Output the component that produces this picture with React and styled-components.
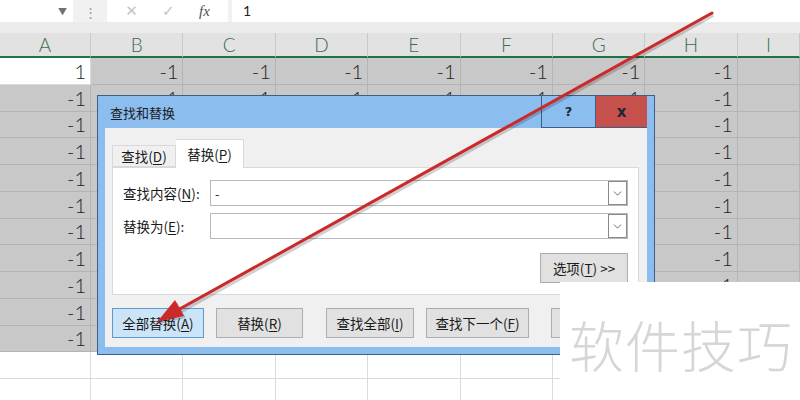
import React from 'react'
import styled, { createGlobalStyle } from 'styled-components'
import { ChevronDown } from 'lucide-react'

const GlobalStyle = createGlobalStyle`
  body {
    margin: 0;
    font-family: "Noto Sans CJK SC", "Noto Sans", sans-serif;
    background: #fff;
  }
`

const Page = styled.div`
  position: relative;
  width: 800px;
  height: 400px;
  overflow: hidden;
  background: #fff;
`

const FormulaBar = styled.div`
  display: flex;
  height: 22px;
  background: #f1f1f1;
`

const NameBox = styled.div`
  width: 73px;
  background: #fff;
  display: flex;
  justify-content: flex-end;
  align-items: center;
  padding-right: 6px;
  box-sizing: border-box;
  color: #707070;
  font-size: 9px;
`

const Grip = styled.div`
  width: 34px;
  display: flex;
  justify-content: center;
  align-items: center;
  color: #9a9a9a;
  font-size: 13px;
`

const FxBox = styled.div`
  width: 121px;
  background: #fff;
  display: flex;
  align-items: center;
  justify-content: space-around;
  padding: 0 6px;
  box-sizing: border-box;
`

const FxIcon = styled.span`
  color: ${({ dark }) => (dark ? '#505050' : '#c4c4c4')};
  font-family: ${({ dark }) => (dark ? '"Liberation Serif", serif' : '"DejaVu Sans", sans-serif')};
  font-style: ${({ dark }) => (dark ? 'italic' : 'normal')};
  font-size: 15px;
`

const FormulaInput = styled.div`
  flex: 1;
  margin-left: 4px;
  background: #fff;
  padding-left: 11px;
  font-family: "Lato", "Noto Sans", sans-serif;
  font-size: 14px;
  line-height: 22px;
  color: #222;
`

const Band = styled.div`
  height: 11px;
  background: #ebebeb;
`

const Sheet = styled.div`
  display: grid;
  grid-template-columns: 91px repeat(7, 92.4px) 1fr;
  grid-template-rows: 25px repeat(13, 26.75px);
`

const ColHead = styled.div`
  background: #e2e2e2;
  border-right: 1px solid #c9c9c9;
  border-bottom: 2px solid #217346;
  display: flex;
  justify-content: center;
  align-items: center;
  font-family: "Lato", "Noto Sans", sans-serif;
  font-weight: 300;
  font-size: 19px;
  color: #3f6a4f;
`

const Cell = styled.div`
  background: ${({ sel }) => (sel ? '#c8c8c8' : '#fff')};
  border-right: 1px solid ${({ sel }) => (sel ? '#b4b4b4' : '#dadada')};
  border-bottom: 1px solid ${({ sel }) => (sel ? '#b4b4b4' : '#dadada')};
  display: flex;
  justify-content: flex-end;
  align-items: center;
  padding-right: 4px;
  font-family: "Lato", "Noto Sans", sans-serif;
  font-weight: 300;
  font-size: 20px;
  color: #1e1e1e;
`

const Dialog = styled.div`
  position: absolute;
  left: 97px;
  top: 95px;
  width: 558px;
  height: 260px;
  box-sizing: border-box;
  border: 1px solid #3d5f86;
  background: #8bbdef;
  padding: 0 7px 7px 7px;
  display: flex;
  flex-direction: column;
`

const TitleBar = styled.div`
  height: 32px;
  display: flex;
  align-items: stretch;
`

const Title = styled.div`
  flex: 1;
  display: flex;
  align-items: center;
  padding-left: 5px;
  font-size: 13px;
  color: #1b1b1b;
`

const CaptionButton = styled.div`
  width: ${({ close }) => (close ? '52px' : '54px')};
  background: ${({ close }) => (close ? '#c6514c' : '#8bbdef')};
  border-left: 1px solid #3d5f86;
  border-bottom: 1px solid #3d5f86;
  display: flex;
  justify-content: center;
  align-items: center;
  font-family: "DejaVu Sans", sans-serif;
  font-weight: bold;
  font-size: ${({ close }) => (close ? '15px' : '13px')};
  color: #1c2733;
  box-sizing: border-box;
`

const Body = styled.div`
  flex: 1;
  background: #f0f0f0;
  display: flex;
  flex-direction: column;
  padding: 10px 8px 0 7px;
`

const TabStrip = styled.div`
  display: flex;
  align-items: flex-end;
  height: 29px;
`

const Tab = styled.div`
  width: ${({ active }) => (active ? '68px' : '64px')};
  height: ${({ active }) => (active ? '29px' : '22px')};
  box-sizing: border-box;
  background: ${({ active }) => (active ? '#fff' : '#f0f0f0')};
  border: 1px solid #d9d9d9;
  border-bottom: ${({ active }) => (active ? '0' : '1px solid #d9d9d9')};
  border-left: ${({ active }) => (active ? '0' : '1px solid #d9d9d9')};
  margin-bottom: ${({ active }) => (active ? '-1px' : '0')};
  position: relative;
  z-index: ${({ active }) => (active ? 1 : 0)};
  display: flex;
  justify-content: center;
  align-items: center;
  font-size: 13.5px;
  color: #1a1a1a;
`

const Key = styled.span`
  text-decoration: underline;
  text-underline-offset: 2px;
`

const Panel = styled.div`
  height: 128px;
  box-sizing: border-box;
  background: #fff;
  border: 1px solid #d9d9d9;
  padding: 12px 10px 0 10px;
  display: flex;
  flex-direction: column;
  gap: 7px;
`

const FieldRow = styled.div`
  display: flex;
  align-items: center;
`

const Label = styled.div`
  width: 87px;
  font-size: 13.5px;
  color: #1a1a1a;
`

const Input = styled.div`
  flex: 1;
  height: 26px;
  box-sizing: border-box;
  border: 1px solid #b8b8b8;
  background: #fff;
  display: flex;
  align-items: center;
  justify-content: space-between;
  padding-left: 4px;
  font-size: 13px;
  color: #333;
`

const DropButton = styled.div`
  width: 19px;
  height: 24px;
  box-sizing: border-box;
  border: 1px solid #8a8a8a;
  display: flex;
  justify-content: center;
  align-items: center;
  color: #555;
`

const OptionsRow = styled.div`
  display: flex;
  justify-content: flex-end;
  margin-top: 7px;
`

const Button = styled.div`
  width: ${({ w }) => w}px;
  height: 30px;
  box-sizing: border-box;
  background: ${({ primary }) => (primary ? '#cce4f7' : '#e1e1e1')};
  border: 1px solid ${({ primary }) => (primary ? '#5b9bd0' : '#adadad')};
  margin-left: ${({ gap }) => gap || 0}px;
  display: flex;
  justify-content: center;
  align-items: center;
  font-size: 13.5px;
  color: #1a1a1a;
  flex-shrink: 0;
`

const ButtonRow = styled.div`
  display: flex;
  margin-top: 13px;
`

const Watermark = styled.div`
  position: absolute;
  left: 560px;
  top: 282px;
  right: 0;
  bottom: 0;
  background: #fff;
  display: flex;
  align-items: center;
  padding-left: 9px;
  padding-top: 4px;
  font-family: "Noto Sans CJK SC", sans-serif;
  font-weight: 300;
  font-size: 55px;
  letter-spacing: 1px;
  color: #d6d6d6;
`

const Overlay = styled.svg`
  position: absolute;
  left: 0;
  top: 0;
  pointer-events: none;
`

const cols = ['A', 'B', 'C', 'D', 'E', 'F', 'G', 'H', 'I']

function Grid() {
  const cells = []
  for (let r = 0; r < 13; r++) {
    cols.forEach((c, i) => {
      const sel = r < 11 && !(r === 0 && i === 0)
      let val = ''
      if (r < 11 && i < 8) val = r === 0 && i === 0 ? '1' : '-1'
      cells.push(
        <Cell key={`${r}-${c}`} sel={sel}>
          {val}
        </Cell>
      )
    })
  }
  return (
    <Sheet>
      {cols.map((c) => (
        <ColHead key={c}>{c}</ColHead>
      ))}
      {cells}
    </Sheet>
  )
}

function Arrow() {
  return (
    <Overlay width="800" height="400" viewBox="0 0 800 400">
      <line x1="713" y1="15" x2="178" y2="313" stroke="#000" strokeOpacity="0.18" strokeWidth="4" />
      <polygon points="159,324 186,318 177,302" fill="#000" fillOpacity="0.18" />
      <line x1="712" y1="13" x2="176" y2="311" stroke="#cc2a2a" strokeWidth="3" strokeLinecap="round" />
      <polygon points="157,322 184,316 175,300" fill="#cc2a2a" />
    </Overlay>
  )
}

export default function App() {
  return (
    <Page>
      <GlobalStyle />
      <FormulaBar>
        <NameBox>▼</NameBox>
        <Grip>⋮</Grip>
        <FxBox>
          <FxIcon>✕</FxIcon>
          <FxIcon>✓</FxIcon>
          <FxIcon dark>fx</FxIcon>
        </FxBox>
        <FormulaInput>1</FormulaInput>
      </FormulaBar>
      <Band />
      <Grid />

      <Dialog>
        <TitleBar>
          <Title>查找和替换</Title>
          <CaptionButton>?</CaptionButton>
          <CaptionButton close>x</CaptionButton>
        </TitleBar>
        <Body>
          <TabStrip>
            <Tab>
              查找(<Key>D</Key>)
            </Tab>
            <Tab active>
              替换(<Key>P</Key>)
            </Tab>
          </TabStrip>
          <Panel>
            <FieldRow>
              <Label>
                查找内容(<Key>N</Key>):
              </Label>
              <Input>
                -
                <DropButton>
                  <ChevronDown size={13} strokeWidth={1.6} />
                </DropButton>
              </Input>
            </FieldRow>
            <FieldRow>
              <Label>
                替换为(<Key>E</Key>):
              </Label>
              <Input>
                <span />
                <DropButton>
                  <ChevronDown size={13} strokeWidth={1.6} />
                </DropButton>
              </Input>
            </FieldRow>
            <OptionsRow>
              <Button w={88}>
                选项(<Key>T</Key>) &gt;&gt;
              </Button>
            </OptionsRow>
          </Panel>
          <ButtonRow>
            <Button w={92} primary>
              全部替换(<Key>A</Key>)
            </Button>
            <Button w={87} gap={12}>
              替换(<Key>R</Key>)
            </Button>
            <Button w={88} gap={23}>
              查找全部(<Key>I</Key>)
            </Button>
            <Button w={103} gap={12}>
              查找下一个(<Key>F</Key>)
            </Button>
            <Button w={87} gap={22}>
              关闭
            </Button>
          </ButtonRow>
        </Body>
      </Dialog>

      <Watermark>软件技巧</Watermark>
      <Arrow />
    </Page>
  )
}
